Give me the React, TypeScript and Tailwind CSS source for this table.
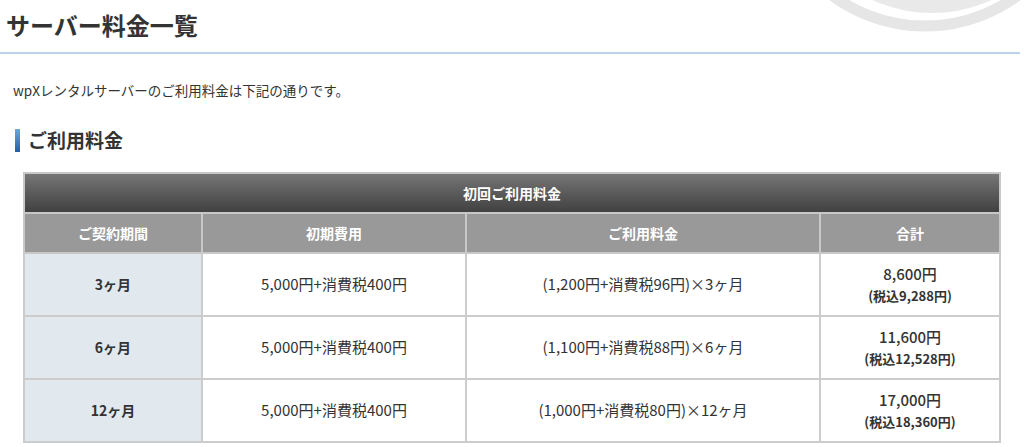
import React from "react";

const rows = [
  { period: "3ヶ月", init: "5,000円+消費税400円", fee: "(1,200円+消費税96円)×3ヶ月", total: "8,600円", tax: "(税込9,288円)" },
  { period: "6ヶ月", init: "5,000円+消費税400円", fee: "(1,100円+消費税88円)×6ヶ月", total: "11,600円", tax: "(税込12,528円)" },
  { period: "12ヶ月", init: "5,000円+消費税400円", fee: "(1,000円+消費税80円)×12ヶ月", total: "17,000円", tax: "(税込18,360円)" },
];

export default function App() {
  return (
    <div className="relative w-[1024px] h-[447px] overflow-hidden bg-white text-[#333] font-['Noto_Sans_CJK_JP',sans-serif]">
      <svg className="absolute left-0 top-0 pointer-events-none" width="1024" height="60" viewBox="0 0 1024 60">
        <circle cx="925" cy="-130" r="156" fill="none" stroke="#e6e6e6" strokeWidth="11" />
        <circle cx="932" cy="-130" r="136" fill="none" stroke="#e9e9e9" strokeWidth="14" />
      </svg>
      <div className="relative w-[1020px] h-[54px] border-b-2 border-[#bcd4ea]">
        <h1 className="pl-[6px] text-[24px] font-bold leading-[50px]">サーバー料金一覧</h1>
      </div>
      <p className="relative mt-[26px] pl-[13px] text-[13.5px] leading-[20px]">wpXレンタルサーバーのご利用料金は下記の通りです。</p>
      <div className="relative mt-[28px] ml-[15px] flex items-center h-[24px]">
        <span className="w-[5px] h-[23px] bg-gradient-to-b from-[#6fa7dd] to-[#1d5fa8]" />
        <h2 className="ml-[8px] text-[19px] font-bold leading-[24px]">ご利用料金</h2>
      </div>
      <table className="relative mt-[20px] ml-[23px] w-[976px] table-fixed border-collapse border-2 border-[#c8c8c8] text-[15px]">
        <colgroup>
          <col className="w-[178px]" />
          <col className="w-[264px]" />
          <col className="w-[354px]" />
          <col className="w-[180px]" />
        </colgroup>
        <thead>
          <tr className="h-[40px]">
            <th colSpan={4} className="bg-gradient-to-b from-[#767676] to-[#414141] text-white font-bold text-[14px] border-2 border-[#c8c8c8]">
              初回ご利用料金
            </th>
          </tr>
          <tr className="h-[40px]">
            {["ご契約期間", "初期費用", "ご利用料金", "合計"].map((h) => (
              <th key={h} className="bg-[#999999] text-white font-bold text-[14px] border-2 border-[#c8c8c8]">
                {h}
              </th>
            ))}
          </tr>
        </thead>
        <tbody>
          {rows.map((r) => (
            <tr key={r.period} className="h-[63px]">
              <td className="bg-[#e1e8ee] text-center font-bold text-[14px] border-2 border-[#cccccc]">{r.period}</td>
              <td className="text-center border-2 border-[#cccccc]">{r.init}</td>
              <td className="text-center border-2 border-[#cccccc]">{r.fee}</td>
              <td className="text-center border-2 border-[#cccccc] leading-[22px]">
                <div className="font-medium">{r.total}</div>
                <div className="text-[13px] font-bold">{r.tax}</div>
              </td>
            </tr>
          ))}
        </tbody>
      </table>
    </div>
  );
}
